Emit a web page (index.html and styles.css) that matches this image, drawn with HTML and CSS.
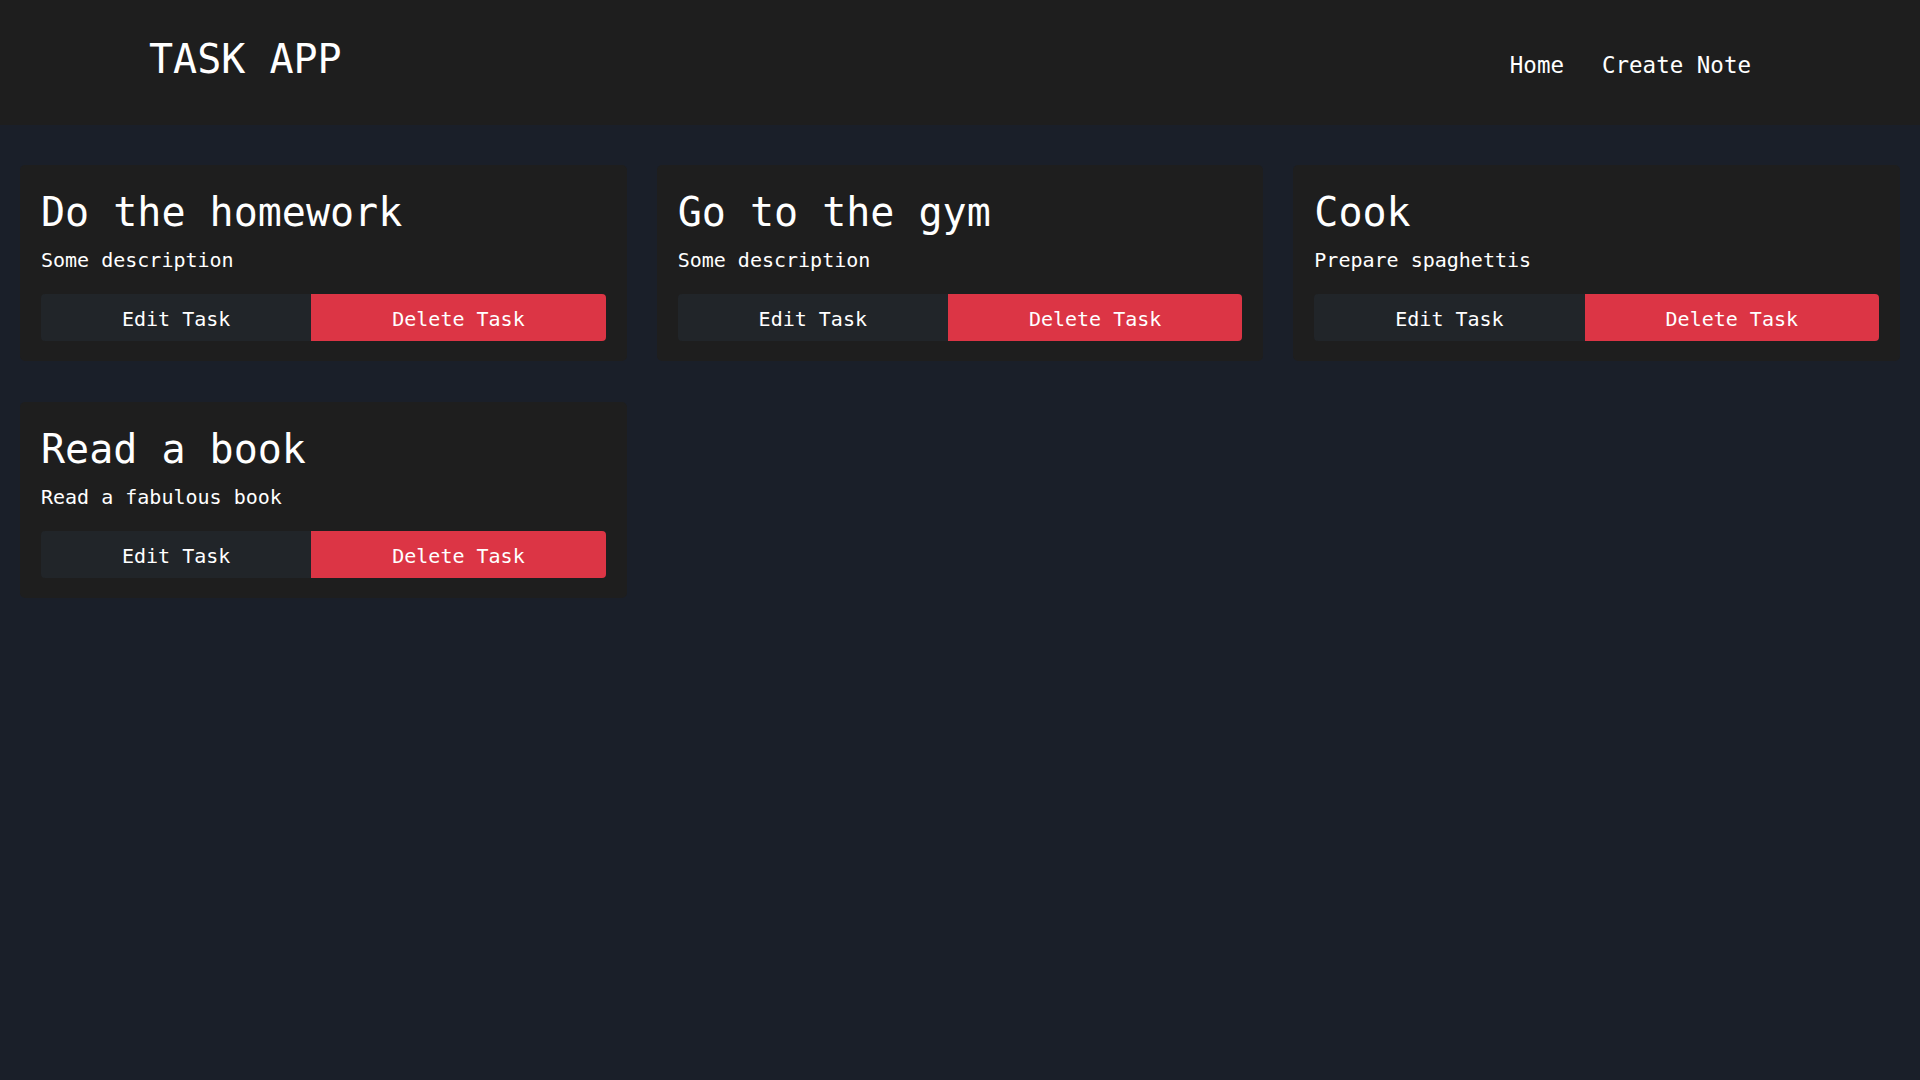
FILE: index.html
```html
<!DOCTYPE html>
<html lang="en">
<head>
<meta charset="utf-8">
<title>Task App</title>
<link rel="stylesheet" href="styles.css">
</head>
<body>
<header class="topbar">
  <h1 class="brand">TASK APP</h1>
  <nav class="nav">
    <a class="nav-link" href="#">Home</a>
    <a class="nav-link" href="#">Create Note</a>
  </nav>
</header>
<main class="tasks">
  <article class="card">
    <h2 class="card-title">Do the homework</h2>
    <p class="card-desc">Some description</p>
    <div class="btn-group">
      <button class="btn btn-edit">Edit Task</button>
      <button class="btn btn-delete">Delete Task</button>
    </div>
  </article>
  <article class="card">
    <h2 class="card-title">Go to the gym</h2>
    <p class="card-desc">Some description</p>
    <div class="btn-group">
      <button class="btn btn-edit">Edit Task</button>
      <button class="btn btn-delete">Delete Task</button>
    </div>
  </article>
  <article class="card">
    <h2 class="card-title">Cook</h2>
    <p class="card-desc">Prepare spaghettis</p>
    <div class="btn-group">
      <button class="btn btn-edit">Edit Task</button>
      <button class="btn btn-delete">Delete Task</button>
    </div>
  </article>
  <article class="card">
    <h2 class="card-title">Read a book</h2>
    <p class="card-desc">Read a fabulous book</p>
    <div class="btn-group">
      <button class="btn btn-edit">Edit Task</button>
      <button class="btn btn-delete">Delete Task</button>
    </div>
  </article>
</main>
</body>
</html>
```

FILE: styles.css
```css
* { box-sizing: border-box; }

html, body {
  margin: 0;
  padding: 0;
}

body {
  background: #1a1f29;
  color: #ffffff;
  font-family: "DejaVu Sans Mono", "Liberation Mono", monospace;
  min-height: 100vh;
}

.topbar {
  height: 125px;
  background: #1e1e1e;
  display: flex;
  align-items: center;
  justify-content: space-between;
  padding: 0 169px 0 149px;
}

.brand {
  margin: 0 0 7px;
  font-size: 40px;
  line-height: 48px;
  font-weight: 400;
}

.nav {
  display: flex;
  gap: 38px;
  margin-top: 4px;
}

.nav-link {
  color: #ffffff;
  text-decoration: none;
  font-size: 22.5px;
  line-height: 28px;
}

.tasks {
  display: grid;
  grid-template-columns: repeat(3, 1fr);
  column-gap: 30px;
  row-gap: 41px;
  padding: 40px 20px;
  align-items: start;
}

.card {
  background: #1e1e1e;
  border-radius: 5px;
  padding: 21px 21px 20px;
}

.card-title {
  margin: 2px 0 0;
  font-size: 40px;
  line-height: 48px;
  font-weight: 400;
}

.card-desc {
  margin: 9px 0 19px;
  font-size: 20px;
  line-height: 30px;
}

.btn-group {
  display: flex;
}

.btn {
  flex: 1 1 auto;
  height: 47px;
  border: none;
  padding: 2px 12px 0;
  color: #ffffff;
  font-family: inherit;
  font-size: 20px;
  cursor: pointer;
}

.btn-edit {
  background: #212529;
  border-radius: 4px 0 0 4px;
}

.btn-delete {
  background: #dc3545;
  border-radius: 0 4px 4px 0;
}
```
